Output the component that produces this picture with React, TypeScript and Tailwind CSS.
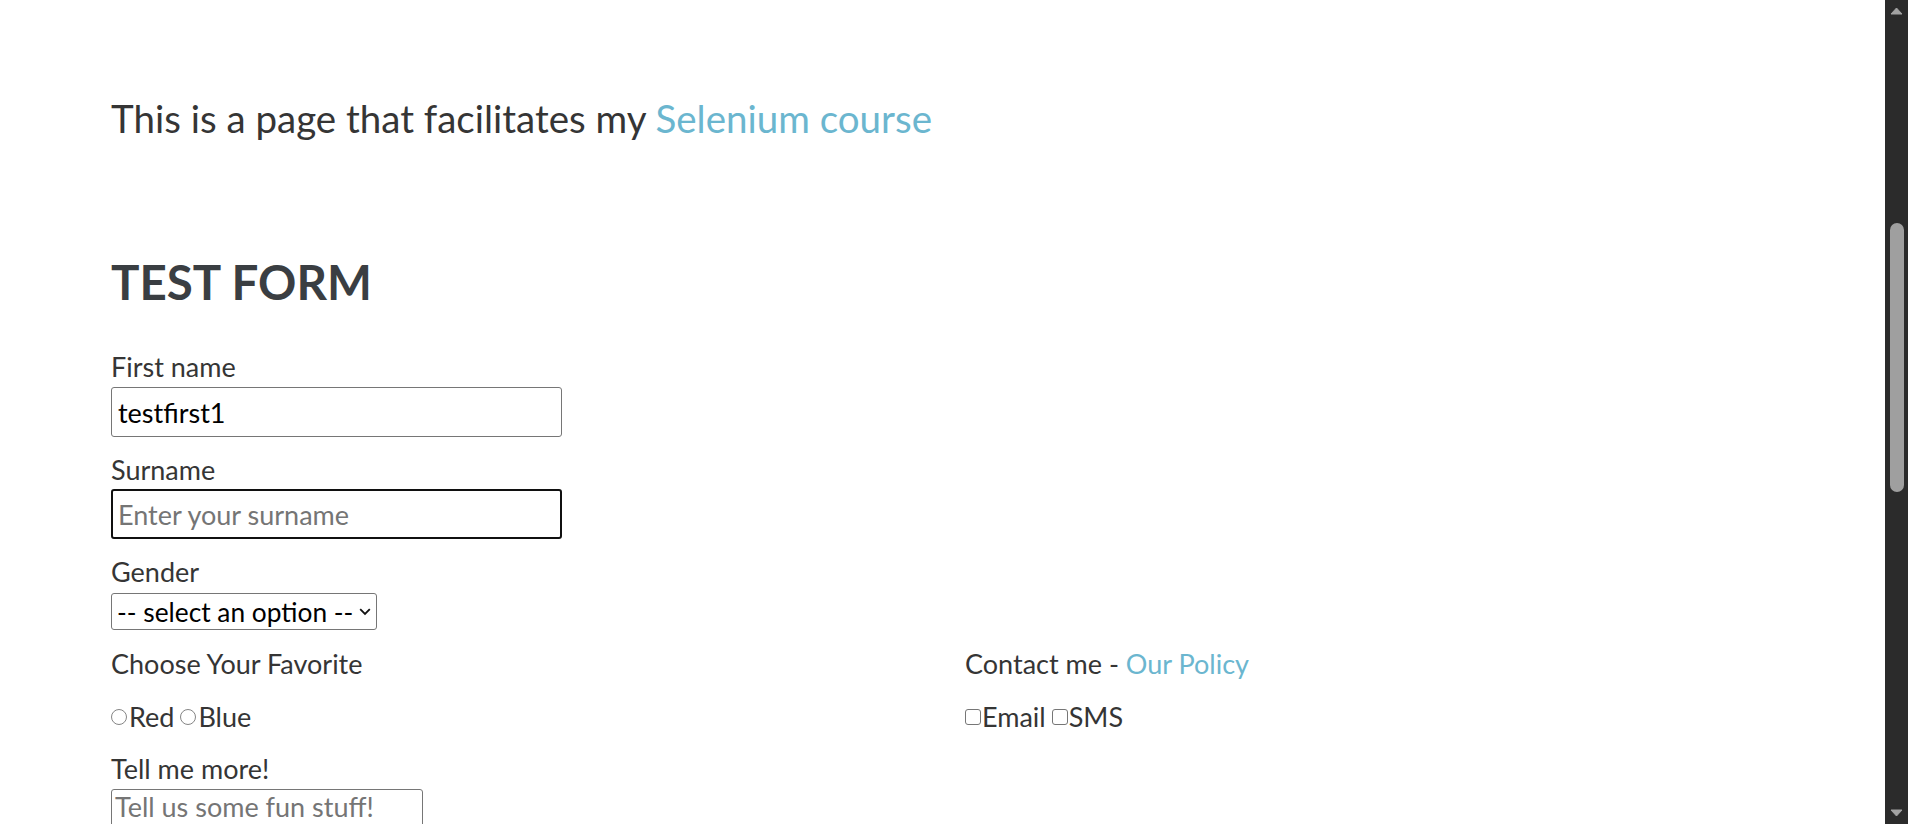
import React from 'react'

const font = { fontFamily: 'Lato, "Noto Sans", sans-serif' }

function Scrollbar() {
  return (
    <div className="flex h-full w-[23px] shrink-0 flex-col items-center bg-[#2b2b2b]">
      <svg width="13" height="8" viewBox="0 0 13 8" className="mt-[7px]">
        <path d="M6.5 1 L12 7 L1 7 Z" fill="#a3a3a3" stroke="#a3a3a3" strokeLinejoin="round" />
      </svg>
      <div className="mt-[208px] h-[269px] w-[14px] rounded-full bg-[#9f9f9f]" />
      <div className="flex-1" />
      <svg width="13" height="8" viewBox="0 0 13 8" className="mb-[7px]">
        <path d="M1 1 L12 1 L6.5 7 Z" fill="#a3a3a3" stroke="#a3a3a3" strokeLinejoin="round" />
      </svg>
    </div>
  )
}

export default function App() {
  return (
    <div className="flex h-screen w-full overflow-hidden bg-white text-[#353535]" style={font}>
      <main className="flex-1 overflow-hidden pl-[111px] pt-[91px]">
        <p className="text-[38.5px] leading-[54px]">
          This is a page that facilitates my <a className="text-[#6bb6cf]">Selenium course</a>
        </p>

        <h2 className="mt-[108px] text-[47.5px] font-bold leading-[58px] text-[#3a3e42]">TEST FORM</h2>

        <form className="mt-[40px] text-[27px]">
          <label className="block leading-[32px]">First name</label>
          <input
            defaultValue="testfirst1"
            className="mt-[4px] block h-[50px] w-[451px] rounded-[3px] border border-[#767676] px-[6px] text-[27px] text-black outline-none"
          />

          <label className="mt-[17px] block leading-[32px]">Surname</label>
          <input
            placeholder="Enter your surname"
            className="mt-[3px] block h-[50px] w-[451px] rounded-[3px] border-2 border-[#101010] px-[5px] text-[27px] text-black outline-none placeholder:text-[#757575]"
          />

          <label className="mt-[17px] block leading-[32px]">Gender</label>
          <div className="relative mt-[5px] w-[266px]">
            <select className="block h-[37px] w-[266px] appearance-none rounded-[3px] border border-[#767676] bg-white pl-[5px] text-[26.3px] leading-[32px] text-black outline-none">
              <option>-- select an option --</option>
            </select>
            <svg
              width="12"
              height="8"
              viewBox="0 0 12 8"
              className="pointer-events-none absolute right-[6px] top-[15px]"
            >
              <path d="M1.2 1.2 L6 6 L10.8 1.2" fill="none" stroke="#111" strokeWidth="1.8" />
            </svg>
          </div>

          <div className="mt-[18px] grid grid-cols-[854px_854px]">
            <div>
              <div className="leading-[32px]">Choose Your Favorite</div>
              <div className="mt-[21px] flex items-center leading-[32px]">
                <input type="radio" name="fav" className="m-0 h-[16px] w-[16px] shrink-0 appearance-none rounded-full border border-[#858585] bg-white" />
                <span className="ml-[2px]">Red</span>
                <input type="radio" name="fav" className="m-0 ml-[6px] h-[16px] w-[16px] shrink-0 appearance-none rounded-full border border-[#858585] bg-white" />
                <span className="ml-[2px]">Blue</span>
              </div>
            </div>
            <div>
              <div className="leading-[32px]">
                Contact me - <a className="text-[#6bb6cf]">Our Policy</a>
              </div>
              <div className="mt-[21px] flex items-center leading-[32px]">
                <input type="checkbox" className="m-0 h-[16px] w-[16px] shrink-0 appearance-none rounded-[3px] border-[1.5px] border-[#767676] bg-white" />
                <span className="ml-[1px]">Email</span>
                <input type="checkbox" className="m-0 ml-[6px] h-[16px] w-[16px] shrink-0 appearance-none rounded-[3px] border-[1.5px] border-[#767676] bg-white" />
                <span className="ml-[1px]">SMS</span>
              </div>
            </div>
          </div>

          <label className="mt-[20px] block leading-[32px]">Tell me more!</label>
          <textarea
            placeholder="Tell us some fun stuff!"
            className="mt-[4px] block h-[90px] w-[312px] resize-none rounded-[3px] border border-[#767676] px-[3px] py-[1px] text-[27px] leading-[32px] text-black outline-none placeholder:text-[#757575]"
          />
        </form>
      </main>
      <Scrollbar />
    </div>
  )
}
